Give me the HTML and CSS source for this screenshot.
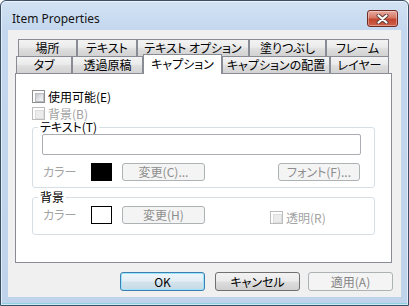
FILE: index.html
```html
<!DOCTYPE html>
<html lang="ja">
<head>
<meta charset="utf-8">
<title>Item Properties</title>
<link rel="stylesheet" href="styles.css">
</head>
<body>
<div class="window">
  <div class="titlebar">
    <div class="title">Item Properties</div>
    <div class="close">
      <svg width="13" height="10" viewBox="0 0 13 10">
        <path d="M2.5 1.5 L10.5 8.5 M10.5 1.5 L2.5 8.5" stroke="#5b3a36" stroke-width="4" stroke-linecap="round"/>
        <path d="M2.5 1.5 L10.5 8.5 M10.5 1.5 L2.5 8.5" stroke="#ffffff" stroke-width="2.2" stroke-linecap="round"/>
      </svg>
    </div>
  </div>
  <div class="client">
    <div class="tabs">
      <div class="tabrow row1">
        <div class="tab w59">場所</div>
        <div class="tab w60">テキスト</div>
        <div class="tab w112">テキスト オプション</div>
        <div class="tab w77">塗りつぶし</div>
        <div class="tab w63">フレーム</div>
      </div>
      <div class="tabrow row2">
        <div class="tab w56">タブ</div>
        <div class="tab w71">透過原稿</div>
        <div class="tab w79 sel">キャプション</div>
        <div class="tab w108">キャプションの配置</div>
        <div class="tab w59">レイヤー</div>
      </div>
      <div class="panel">
        <div class="check-row">
          <span class="cb"></span><span class="cb-label">使用可能(E)</span>
        </div>
        <div class="check-row second">
          <span class="cb disabled"></span><span class="cb-label gray">背景(B)</span>
        </div>
        <div class="group g1">
          <div class="legend l1">テキスト(T)</div>
          <div class="input"></div>
          <div class="color-row">
            <span class="clabel">カラー</span>
            <span class="swatch black"></span>
            <span class="btn-d change">変更(C)...</span>
            <span class="btn-d font">フォント(F)...</span>
          </div>
        </div>
        <div class="group g2">
          <div class="legend l2">背景</div>
          <div class="color-row first">
            <span class="clabel">カラー</span>
            <span class="swatch white"></span>
            <span class="btn-d change">変更(H)</span>
            <span class="check-row trans">
              <span class="cb disabled"></span><span class="cb-label gray">透明(R)</span>
            </span>
          </div>
        </div>
      </div>
    </div>
    <div class="buttons">
      <div class="btn default ok">OK</div>
      <div class="btn cancel">キャンセル</div>
      <div class="btn disabled">適用(A)</div>
    </div>
  </div>
</div>
</body>
</html>
```
FILE: styles.css
```css
* { box-sizing: border-box; }
html, body { margin: 0; padding: 0; }
body {
  width: 409px;
  height: 306px;
  background: #ffffff;
  font-family: "Noto Sans CJK JP", "Noto Sans", sans-serif;
  font-size: 12px;
  font-feature-settings: "palt";
  color: #000;
  overflow: hidden;
}

.window {
  width: 409px;
  height: 306px;
  border: 1px solid #3b5066;
  border-radius: 6px 6px 0 0;
  background: linear-gradient(to bottom, #d3e2f4 0px, #c3d7ee 30px, #bfd4eb 100%);
  box-shadow: inset 0 0 0 1px rgba(255,255,255,0.55), inset 0 -2px 0 #8fd3e3;
  display: flex;
  flex-direction: column;
}

.titlebar {
  height: 29px;
  display: flex;
  align-items: flex-start;
  justify-content: space-between;
  padding: 9px 10px 0 11px;
}
.title {
  font-family: "Noto Sans", "Open Sans", sans-serif;
  font-size: 12px;
  line-height: 16px;
  color: #141414;
  margin-top: 1px;
}
.close {
  width: 31px;
  height: 17px;
  border: 1px solid #6e2b23;
  border-radius: 3px;
  background: linear-gradient(to bottom, #e7aa9f 0%, #d67865 45%, #c24530 55%, #cf6149 100%);
  box-shadow: inset 0 0 0 1px rgba(255,255,255,0.35);
  display: flex;
  align-items: center;
  justify-content: center;
}

.client {
  flex: 1;
  margin: 0 7px 8px 7px;
  background: #f0f0f0;
  padding: 9px 9px 0 7px;
  display: flex;
  flex-direction: column;
}

.tabs { width: 377px; }
.tabrow { display: flex; height: 17px; }
.row1 { padding-left: 3px; }
.row2 { padding-left: 1px; align-items: flex-end; position: relative; z-index: 1; }

.tab {
  height: 17px;
  border: 1px solid #898c95;
  border-bottom: none;
  background: linear-gradient(to bottom, #f3f3f3 0%, #ebebeb 45%, #dedede 55%, #d2d2d2 100%);
  text-align: center;
  line-height: 16px;
  white-space: nowrap;
  flex: none;
}
.tab.sel {
  height: 20px;
  margin-bottom: -1px;
  background: #ffffff;
  line-height: 17px;
}
.w56 { width: 56px; }
.w59 { width: 59px; }
.w60 { width: 60px; }
.w63 { width: 63px; }
.w71 { width: 71px; }
.w77 { width: 77px; }
.w79 { width: 79px; }
.w108 { width: 108px; }
.w112 { width: 112px; }

.panel {
  height: 190px;
  border: 1px solid #898c95;
  background: #ffffff;
  padding: 16px 0 0 16px;
}

.check-row {
  display: flex;
  align-items: center;
  height: 13px;
  line-height: 13px;
  white-space: nowrap;
}
.check-row.second { margin-top: 4px; }
.cb {
  width: 13px;
  height: 13px;
  border: 1px solid #8e8f8f;
  background: #ffffff;
  padding: 2px;
  flex: none;
  display: block;
}
.cb::before {
  content: "";
  display: block;
  width: 100%;
  height: 100%;
  background: linear-gradient(135deg, #c3c6cb 0%, #e6e7e9 60%, #f6f6f6 100%);
  border: 1px solid #b9bcc1;
}
.cb.disabled { border-color: #bcbcbc; }
.cb.disabled::before { background: #ececec; border-color: #dcdcdc; }
.cb-label { margin-left: 3px; }
.gray { color: #a2a2a2; }

.group {
  position: relative;
  width: 343px;
  border: 1px solid #d5dfe5;
  border-radius: 3px;
}
.g1 { margin-top: 7px; height: 61px; padding: 6px 13px 0 9px; }
.g2 { margin-top: 9px; height: 38px; padding: 8px 13px 0 9px; }
.legend {
  position: absolute;
  left: 5px;
  padding: 0 2px;
  line-height: 12px;
  white-space: nowrap;
  background: #ffffff;
}
.l1 { top: -7px; }
.l2 { top: -7px; }

.input {
  width: 319px;
  height: 21px;
  border: 1px solid #abadb3;
  border-radius: 2px;
  background: #ffffff;
}

.color-row {
  display: flex;
  align-items: center;
  height: 18px;
  margin-top: 8px;
}
.color-row.first { margin-top: 0; }
.clabel { width: 49px; padding-left: 1px; color: #a2a2a2; flex: none; line-height: 16px; }
.swatch { width: 21px; height: 18px; border: 1px solid #000; flex: none; }
.swatch.black { background: #000; }
.swatch.white { background: #fff; }
.btn-d {
  height: 18px;
  border: 1px solid #adb2b5;
  border-radius: 3px;
  background: #f4f4f4;
  color: #8d8d8d;
  text-align: center;
  line-height: 16px;
  white-space: nowrap;
  flex: none;
}
.btn-d.change { width: 83px; margin-left: 10px; }
.btn-d.font { width: 82px; margin-left: auto; margin-right: 1px; }
.check-row.trans { margin-left: 65px; align-self: flex-start; margin-top: 5px; }

.buttons {
  display: flex;
  margin-top: 9px;
  margin-left: 105px;
}
.btn {
  width: 85px;
  height: 19px;
  border: 1px solid #707070;
  border-radius: 3px;
  background: linear-gradient(to bottom, #f2f2f2 0%, #ebebeb 48%, #dddddd 52%, #cfcfcf 100%);
  text-align: center;
  line-height: 17px;
  white-space: nowrap;
  flex: none;
}
.btn.default {
  border-color: #3c7fb1;
  box-shadow: inset 0 0 0 1px #9be2fb;
  background: linear-gradient(to bottom, #eef6fa 0%, #e3eef4 48%, #d3e3ec 52%, #c6dae5 100%);
}
.btn.ok { margin-right: 10px; }
.btn.cancel { margin-right: 8px; }
.btn.disabled {
  border-color: #adb2b5;
  background: #f4f4f4;
  color: #838383;
}
```
